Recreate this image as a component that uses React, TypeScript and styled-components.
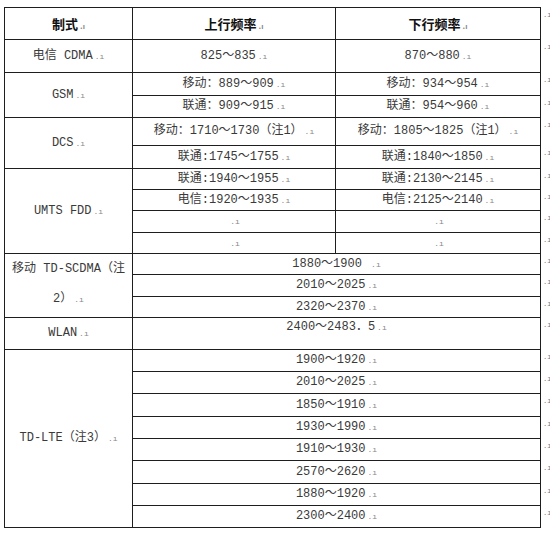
import React from "react";
import styled, { createGlobalStyle, css } from "styled-components";

const GlobalStyle = createGlobalStyle`
  html, body {
    margin: 0;
    padding: 0;
    background: #ffffff;
  }
  body {
    font-family: "Liberation Mono", "Noto Sans CJK SC", monospace;
    color: #3a3a3a;
  }
`;

const Page = styled.div`
  padding: 7px 0 0 4px;
`;

const Sheet = styled.table`
  border-collapse: collapse;
  table-layout: fixed;
  width: 544px;
  font-size: 12px;
`;

const Row = styled.tr<{ $h: number }>`
  height: ${(p) => p.$h}px;
`;

const cellBase = css`
  border: 1px solid #1e1e1e;
  padding: 0 3px;
  text-align: center;
  vertical-align: middle;
  line-height: 1.2;
  white-space: nowrap;
  overflow: hidden;
`;

const HeadCell = styled.td`
  ${cellBase}
  font-size: 13px;
  font-weight: bold;
  color: #111;
  font-family: "Noto Sans CJK SC", sans-serif;
`;

const Cell = styled.td<{ $top?: boolean }>`
  ${cellBase}
  ${(p) =>
    p.$top &&
    css`
      vertical-align: top;
      padding-top: 2px;
    `}
`;

const LabelCell = styled.td<{ $tall?: boolean }>`
  ${cellBase}
  white-space: normal;
  ${(p) =>
    p.$tall &&
    css`
      line-height: 30px;
      padding-bottom: 2px;
    `}
`;

const RowEnd = styled.td`
  border: none;
  padding: 4px 0 0 2px;
  vertical-align: top;
  font-size: 7px;
  color: #777;
  line-height: 1;
  white-space: nowrap;
`;

const Mark = styled.span`
  font-size: 8px;
  color: #888;
  margin-left: 2px;
`;

const M = () => <Mark>.ı</Mark>;

const End = () => <RowEnd>.ı</RowEnd>;

const tdScdma = ["1880～1900 ", "2010～2025", "2320～2370"];
const tdLte = [
  "1900～1920",
  "2010～2025",
  "1850～1910",
  "1930～1990",
  "1910～1930",
  "2570～2620",
  "1880～1920",
  "2300～2400",
];
const lteHeights = [22, 22, 23, 22, 22, 23, 22, 22];
const scdmaHeights = [21, 22, 21];

export default function App() {
  return (
    <Page>
      <GlobalStyle />
      <Sheet>
        <colgroup>
          <col style={{ width: 128 }} />
          <col style={{ width: 203 }} />
          <col style={{ width: 205 }} />
          <col style={{ width: 8 }} />
        </colgroup>
        <tbody>
          <Row $h={32}>
            <HeadCell>
              制式<M />
            </HeadCell>
            <HeadCell>
              上行频率<M />
            </HeadCell>
            <HeadCell>
              下行频率<M />
            </HeadCell>
            <End />
          </Row>
          <Row $h={33}>
            <Cell>
              电信 CDMA<M />
            </Cell>
            <Cell>
              825～835<M />
            </Cell>
            <Cell>
              870～880<M />
            </Cell>
            <End />
          </Row>
          <Row $h={23}>
            <LabelCell rowSpan={2}>
              GSM<M />
            </LabelCell>
            <Cell>
              移动：889～909<M />
            </Cell>
            <Cell>
              移动：934～954<M />
            </Cell>
            <End />
          </Row>
          <Row $h={22}>
            <Cell>
              联通：909～915<M />
            </Cell>
            <Cell>
              联通：954～960<M />
            </Cell>
            <End />
          </Row>
          <Row $h={28}>
            <LabelCell rowSpan={2}>
              DCS<M />
            </LabelCell>
            <Cell>
              移动：1710～1730（注1）<M />
            </Cell>
            <Cell>
              移动：1805～1825（注1）<M />
            </Cell>
            <End />
          </Row>
          <Row $h={23}>
            <Cell>
              联通:1745～1755<M />
            </Cell>
            <Cell>
              联通:1840～1850<M />
            </Cell>
            <End />
          </Row>
          <Row $h={21}>
            <LabelCell rowSpan={4}>
              UMTS FDD<M />
            </LabelCell>
            <Cell>
              联通:1940～1955<M />
            </Cell>
            <Cell>
              联通:2130～2145<M />
            </Cell>
            <End />
          </Row>
          <Row $h={21}>
            <Cell>
              电信:1920～1935<M />
            </Cell>
            <Cell>
              电信:2125～2140<M />
            </Cell>
            <End />
          </Row>
          <Row $h={22}>
            <Cell>
              <M />
            </Cell>
            <Cell>
              <M />
            </Cell>
            <End />
          </Row>
          <Row $h={21}>
            <Cell>
              <M />
            </Cell>
            <Cell>
              <M />
            </Cell>
            <End />
          </Row>
          {tdScdma.map((band, i) => (
            <Row $h={scdmaHeights[i]} key={"s" + i}>
              {i === 0 && (
                <LabelCell rowSpan={3} $tall>
                  移动 TD-SCDMA（注
                  <br />
                  2）<M />
                </LabelCell>
              )}
              <Cell colSpan={2}>
                {band}
                <M />
              </Cell>
              <End />
            </Row>
          ))}
          <Row $h={32}>
            <LabelCell>
              WLAN<M />
            </LabelCell>
            <Cell colSpan={2} $top>
              2400～2483．5<M />
            </Cell>
            <End />
          </Row>
          {tdLte.map((band, i) => (
            <Row $h={lteHeights[i]} key={"l" + i}>
              {i === 0 && (
                <LabelCell rowSpan={8}>
                  TD-LTE（注3）<M />
                </LabelCell>
              )}
              <Cell colSpan={2}>
                {band}
                <M />
              </Cell>
              <End />
            </Row>
          ))}
        </tbody>
      </Sheet>
    </Page>
  );
}
